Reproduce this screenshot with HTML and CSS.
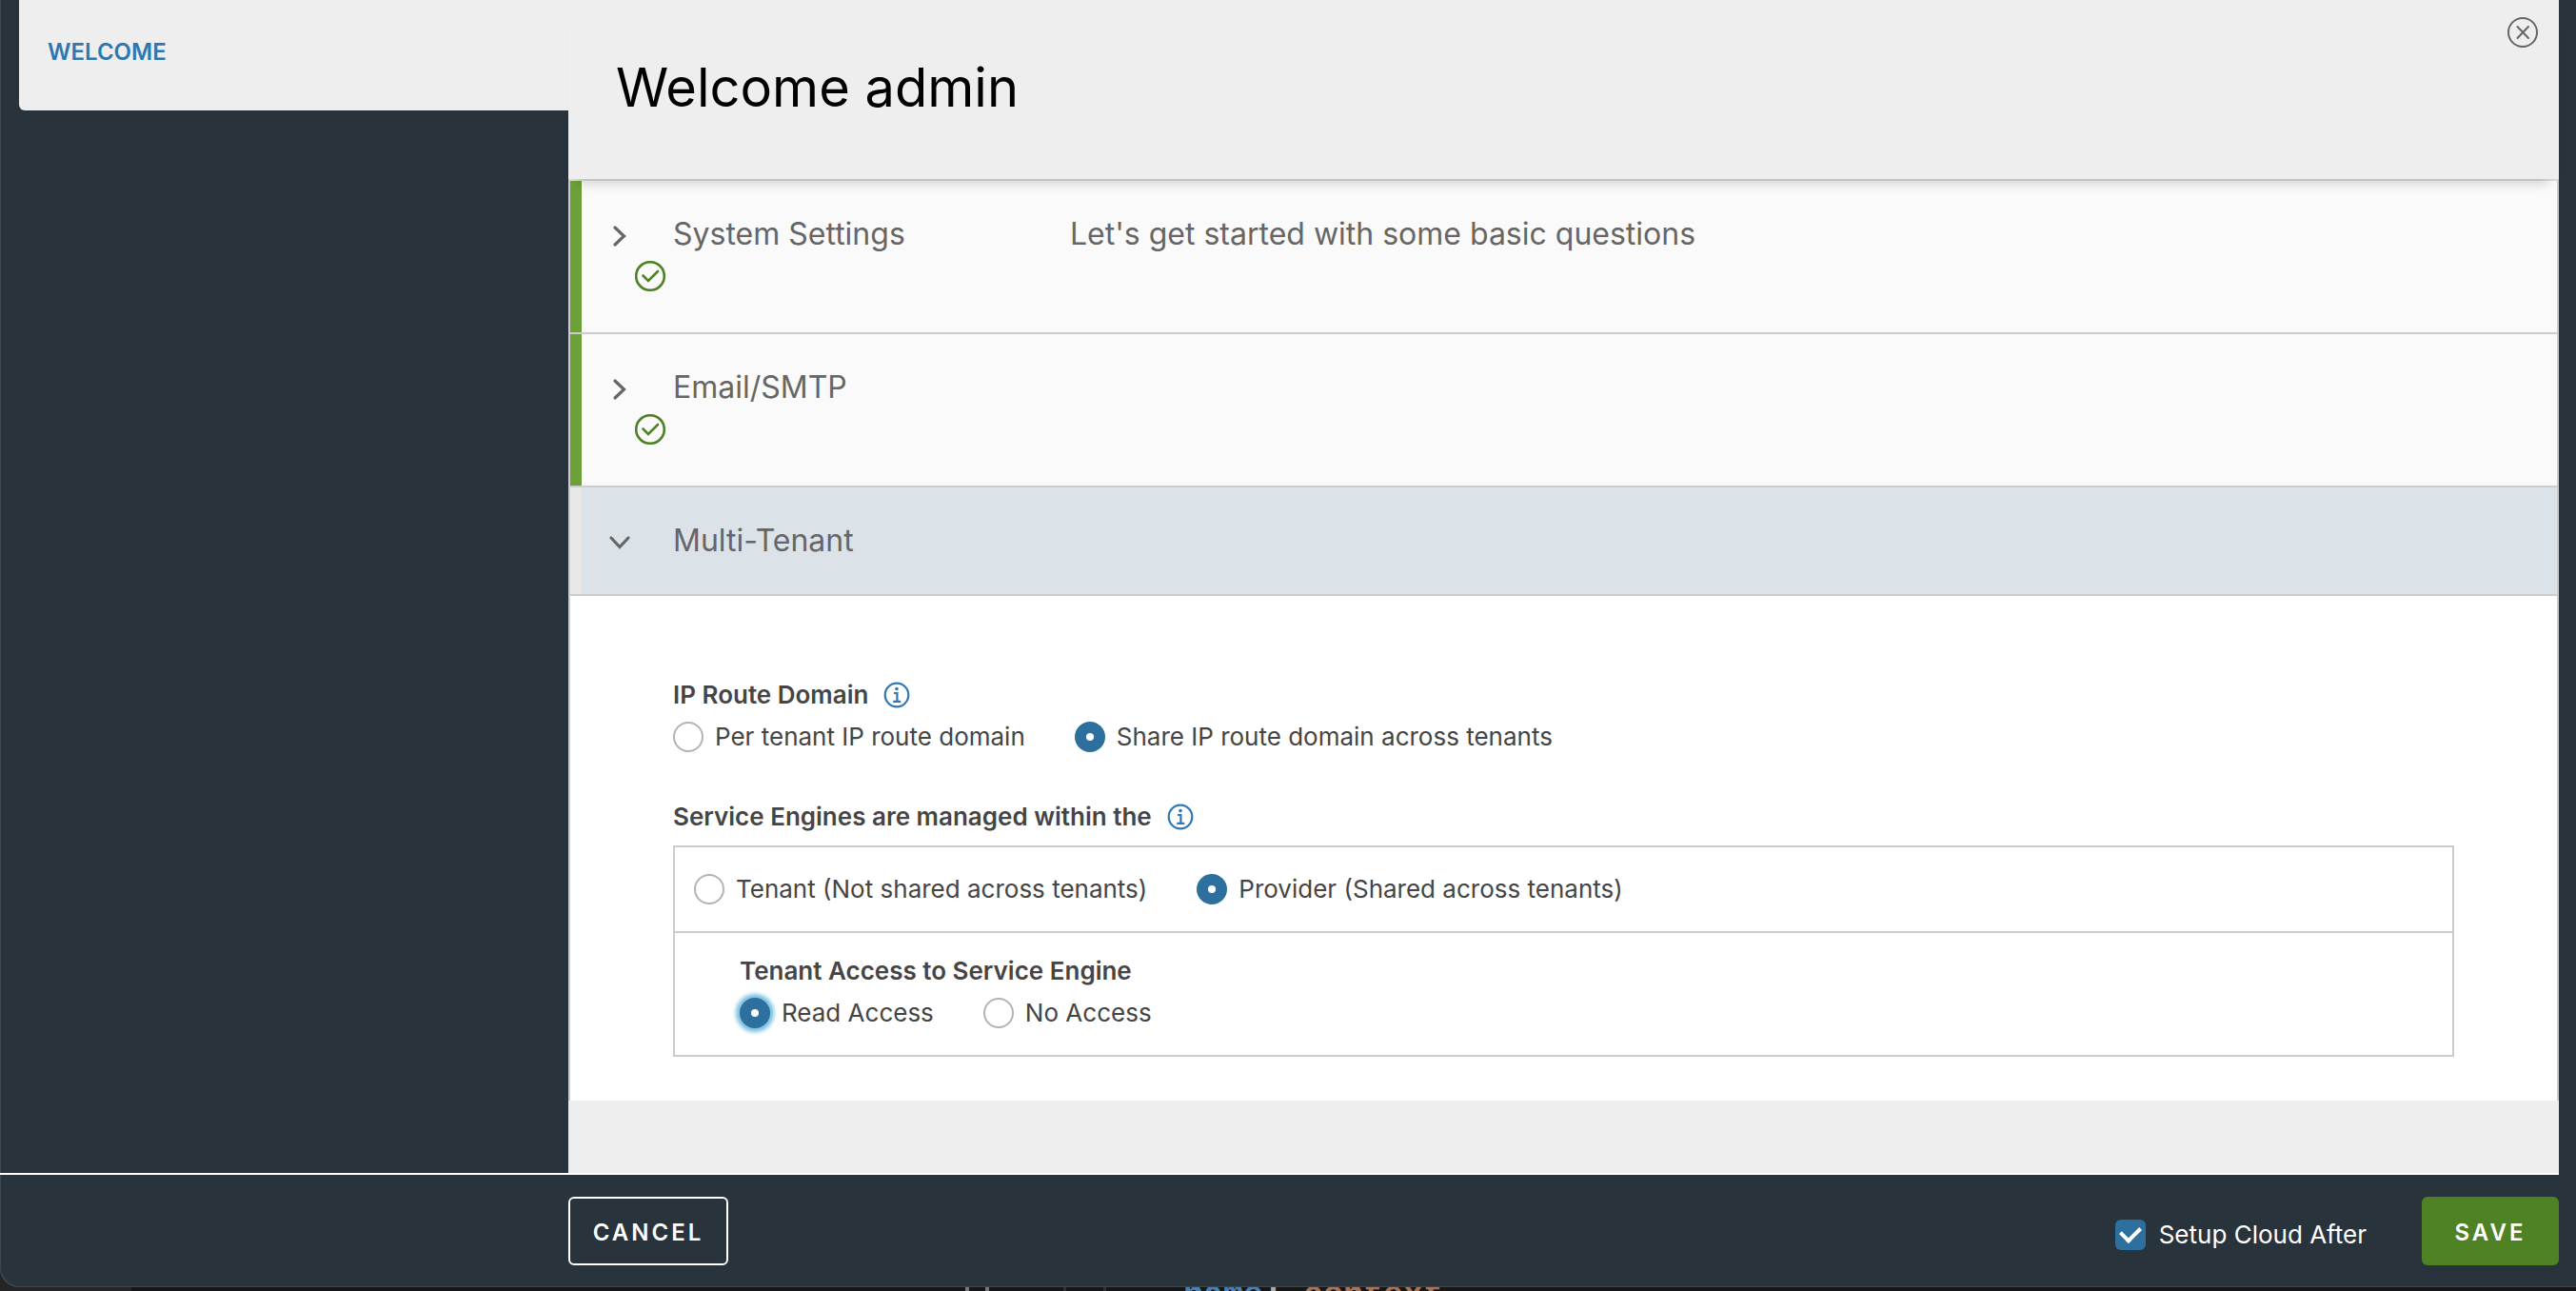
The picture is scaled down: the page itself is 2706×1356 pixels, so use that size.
FILE: index.html
```html
<!DOCTYPE html>
<html lang="en">
<head>
<meta charset="utf-8">
<title>Welcome admin</title>
<link rel="stylesheet" href="styles.css">
</head>
<body>
<svg class="sprite" aria-hidden="true">
  <symbol id="chevron" viewBox="0 0 32 32"><path d="M11 7l9.500 9-9.500 9" fill="none" stroke="currentColor" stroke-width="3.200" stroke-linecap="round" stroke-linejoin="miter"/></symbol>
  <symbol id="check" viewBox="0 0 32 32"><circle cx="16" cy="16" r="14.800" fill="none" stroke="currentColor" stroke-width="2.600"/><path d="M8.500 15.500l5.500 5.500L24 11" fill="none" stroke="currentColor" stroke-width="2.600" stroke-linecap="round"/></symbol>
  <symbol id="info" viewBox="0 0 28 28"><circle cx="14" cy="14" r="12.300" fill="none" stroke="currentColor" stroke-width="2.200"/><circle cx="14" cy="7.600" r="1.800" fill="currentColor"/><path d="M11 12h3.400v8.500M10.200 20.800h8" fill="none" stroke="currentColor" stroke-width="2.200"/></symbol>
  <symbol id="close" viewBox="0 0 32 32"><circle cx="16" cy="16" r="15" fill="none" stroke="currentColor" stroke-width="2"/><path d="M10.500 10l11.500 12M22 10L10.500 22" fill="none" stroke="currentColor" stroke-width="2" stroke-linecap="round"/></symbol>
</svg>
<div class="window">
  <div class="workspace">
    <nav class="sidebar"><a class="tab" href="#welcome">WELCOME</a></nav>
    <main class="panel" id="welcome">
      <header class="panel-header">
        <h1 class="title">Welcome admin</h1>
        <button class="close" type="button" aria-label="Close"><svg class="icon"><use href="#close"/></svg></button>
      </header>
      <form class="accordion" id="setup">
        <button class="step done" type="button" aria-expanded="false">
          <span class="status"><svg class="icon"><use href="#chevron"/></svg><svg class="icon complete"><use href="#check"/></svg></span>
          <span class="step-title">System Settings</span>
          <span class="step-text">Let's get started with some basic questions</span>
        </button>
        <button class="step done" type="button" aria-expanded="false">
          <span class="status"><svg class="icon"><use href="#chevron"/></svg><svg class="icon complete"><use href="#check"/></svg></span>
          <span class="step-title">Email/SMTP</span>
        </button>
        <button class="step open" type="button" aria-expanded="true">
          <span class="status"><svg class="icon"><use href="#chevron"/></svg></span>
          <span class="step-title">Multi-Tenant</span>
        </button>
        <div class="content">
          <section class="field" role="radiogroup" aria-labelledby="route-label">
            <h2 class="label" id="route-label">IP Route Domain <svg class="info"><use href="#info"/></svg></h2>
            <div class="options">
              <label class="option"><input class="radio" type="radio" name="route">Per tenant IP route domain</label>
              <label class="option"><input class="radio" type="radio" name="route" checked>Share IP route domain across tenants</label>
            </div>
          </section>
          <section class="engines" role="radiogroup" aria-labelledby="engine-label">
            <h2 class="label" id="engine-label">Service Engines are managed within the <svg class="info"><use href="#info"/></svg></h2>
            <div class="box">
              <div class="options box-row">
                <label class="option"><input class="radio" type="radio" name="engine">Tenant (Not shared across tenants)</label>
                <label class="option"><input class="radio" type="radio" name="engine" checked>Provider (Shared across tenants)</label>
              </div>
              <div class="field nested" role="radiogroup" aria-labelledby="access-label">
                <h3 class="label" id="access-label">Tenant Access to Service Engine</h3>
                <div class="options">
                  <label class="option"><input class="radio focused" type="radio" name="access" checked>Read Access</label>
                  <label class="option"><input class="radio" type="radio" name="access">No Access</label>
                </div>
              </div>
            </div>
          </section>
        </div>
      </form>
    </main>
  </div>
  <footer class="footer">
    <button class="btn cancel" type="button">CANCEL</button>
    <div class="actions">
      <label class="setup"><input class="checkbox" type="checkbox" form="setup" checked>Setup Cloud After</label>
      <button class="btn save" type="submit" form="setup">SAVE</button>
    </div>
  </footer>
</div>
<div class="backdrop"><code class="code"><span class="key">name</span>: <span class="value">context</span></code></div>
</body>
</html>
```
FILE: styles.css
```css
* { box-sizing: border-box; }

body {
  margin: 0;
  height: 100vh;
  display: flex;
  flex-direction: column;
  background: #252525;
  font-family: Inter, "Open Sans", sans-serif;
  font-size: 26px;
  line-height: 32px;
  color: #454545;
}

h1, h2, h3 { margin: 0; }
button { font: inherit; color: inherit; }
.sprite { display: none; }
.icon { display: block; width: 32px; height: 32px; overflow: visible; }

.window {
  flex: 1;
  display: flex;
  flex-direction: column;
  background: #29333c;
  border-radius: 0 0 0 20px;
  box-shadow: inset 1px -1px 0 #3d4a54;
}

.workspace {
  flex: 1;
  display: grid;
  grid-template-columns: 597px 1fr;
  margin-right: 18px;
  border-bottom: 2px solid #fff;
}

.sidebar { padding-left: 20px; }

.tab {
  display: block;
  height: 116px;
  padding: 39px 30px;
  background: #eee;
  border-radius: 0 0 0 6px;
  color: #2f77ae;
  font-size: 24px;
  font-weight: 600;
  text-decoration: none;
}

.panel { background: #eee; }

.panel-header {
  position: relative;
  display: flex;
  justify-content: space-between;
  align-items: flex-start;
  height: 188px;
  padding: 18px 22px 0 50px;
  background: #eee;
  box-shadow: 0 14px 12px -10px rgba(0, 0, 0, .18);
}

.title {
  padding-top: 42px;
  font-size: 56px;
  line-height: 64px;
  font-weight: 400;
  color: #000;
}

.close { padding: 0; border: 0; background: none; color: #666; }

.accordion {
  border: 2px solid #ccc;
  border-top-color: #ddd;
  border-bottom: 0;
}

.step {
  display: grid;
  grid-template-columns: 96px 417px 1fr;
  align-items: start;
  width: 100%;
  padding: 36px 0 43px 12px;
  border: 0;
  border-bottom: 2px solid #ccc;
  color: #666;
  font-size: 32px;
  line-height: 40px;
  text-align: left;
}

.done { background: linear-gradient(to right, #6ca13a 12px, #fafafa 12px); }
.open { padding-bottom: 36px; background: linear-gradient(to right, #e8e8e8 12px, #dbe3e9 12px); }
.open .icon { transform: rotate(90deg); }

.status {
  display: flex;
  flex-direction: column;
  gap: 10px;
  padding: 6px 0 0 24px;
}

.complete { margin-left: 32px; color: #4f8125; }

.content {
  display: flex;
  flex-direction: column;
  gap: 52px;
  padding: 88px 108px 46px;
  background: #fff;
}

.field { display: flex; flex-direction: column; gap: 12px; }
.engines { display: flex; flex-direction: column; gap: 14px; }

.label {
  display: flex;
  align-items: center;
  gap: 16px;
  font-size: 26px;
  line-height: 32px;
  font-weight: 600;
}

.info { width: 28px; height: 28px; color: #3077b5; }

.options { display: flex; gap: 52px; }
.option { display: flex; align-items: center; gap: 12px; }

.radio {
  appearance: none;
  width: 32px;
  height: 32px;
  margin: 0;
  border: 2px solid #b3b3b3;
  border-radius: 50%;
  background: #fff;
}

.radio:checked { border: 12px solid #2d709e; }
.focused { box-shadow: 0 0 4px 4px #79bfe0; }

.box { border: 2px solid #ccc; }
.box-row { padding: 28px 20px; border-bottom: 2px solid #ccc; }
.nested { padding: 24px 68px 28px; }

.footer {
  display: flex;
  justify-content: space-between;
  align-items: center;
  padding: 23px 18px 23px 597px;
  color: #fff;
}

.btn {
  height: 72px;
  padding: 4px 0 0;
  border-radius: 6px;
  font-size: 24px;
  font-weight: 600;
  letter-spacing: 3px;
  color: #fff;
}

.cancel { width: 168px; border: 2px solid #fff; background: none; }
.save { width: 144px; border: 0; background: #4f8125; }

.actions { display: flex; align-items: center; gap: 58px; }
.setup { display: flex; align-items: center; gap: 14px; padding-top: 8px; }

.checkbox {
  appearance: none;
  width: 32px;
  height: 32px;
  margin: 0;
  border-radius: 6px;
  background: #2d709e;
  display: grid;
  place-items: center;
}

.checkbox:checked::after {
  content: "";
  width: 16px;
  height: 10px;
  margin-bottom: 6px;
  border: solid #fff;
  border-width: 0 0 4px 4px;
  rotate: -45deg;
}

.backdrop {
  height: 4px;
  overflow: hidden;
  padding-left: 1243px;
  background:
    linear-gradient(#777, #777) 1014px 0 / 4px 4px no-repeat,
    linear-gradient(#777, #777) 1035px 0 / 4px 4px no-repeat,
    linear-gradient(#303030, #303030) 1117px 0 / 3px 4px no-repeat,
    linear-gradient(#303030, #303030) 1159px 0 / 3px 4px no-repeat,
    linear-gradient(to right, #252525 138px, #161616 138px);
}

.code {
  display: block;
  font: bold 35px/18px "Liberation Mono", monospace;
  color: #aaa;
}

.key { color: #4d80b0; }
.value { color: #a9745c; }
```
